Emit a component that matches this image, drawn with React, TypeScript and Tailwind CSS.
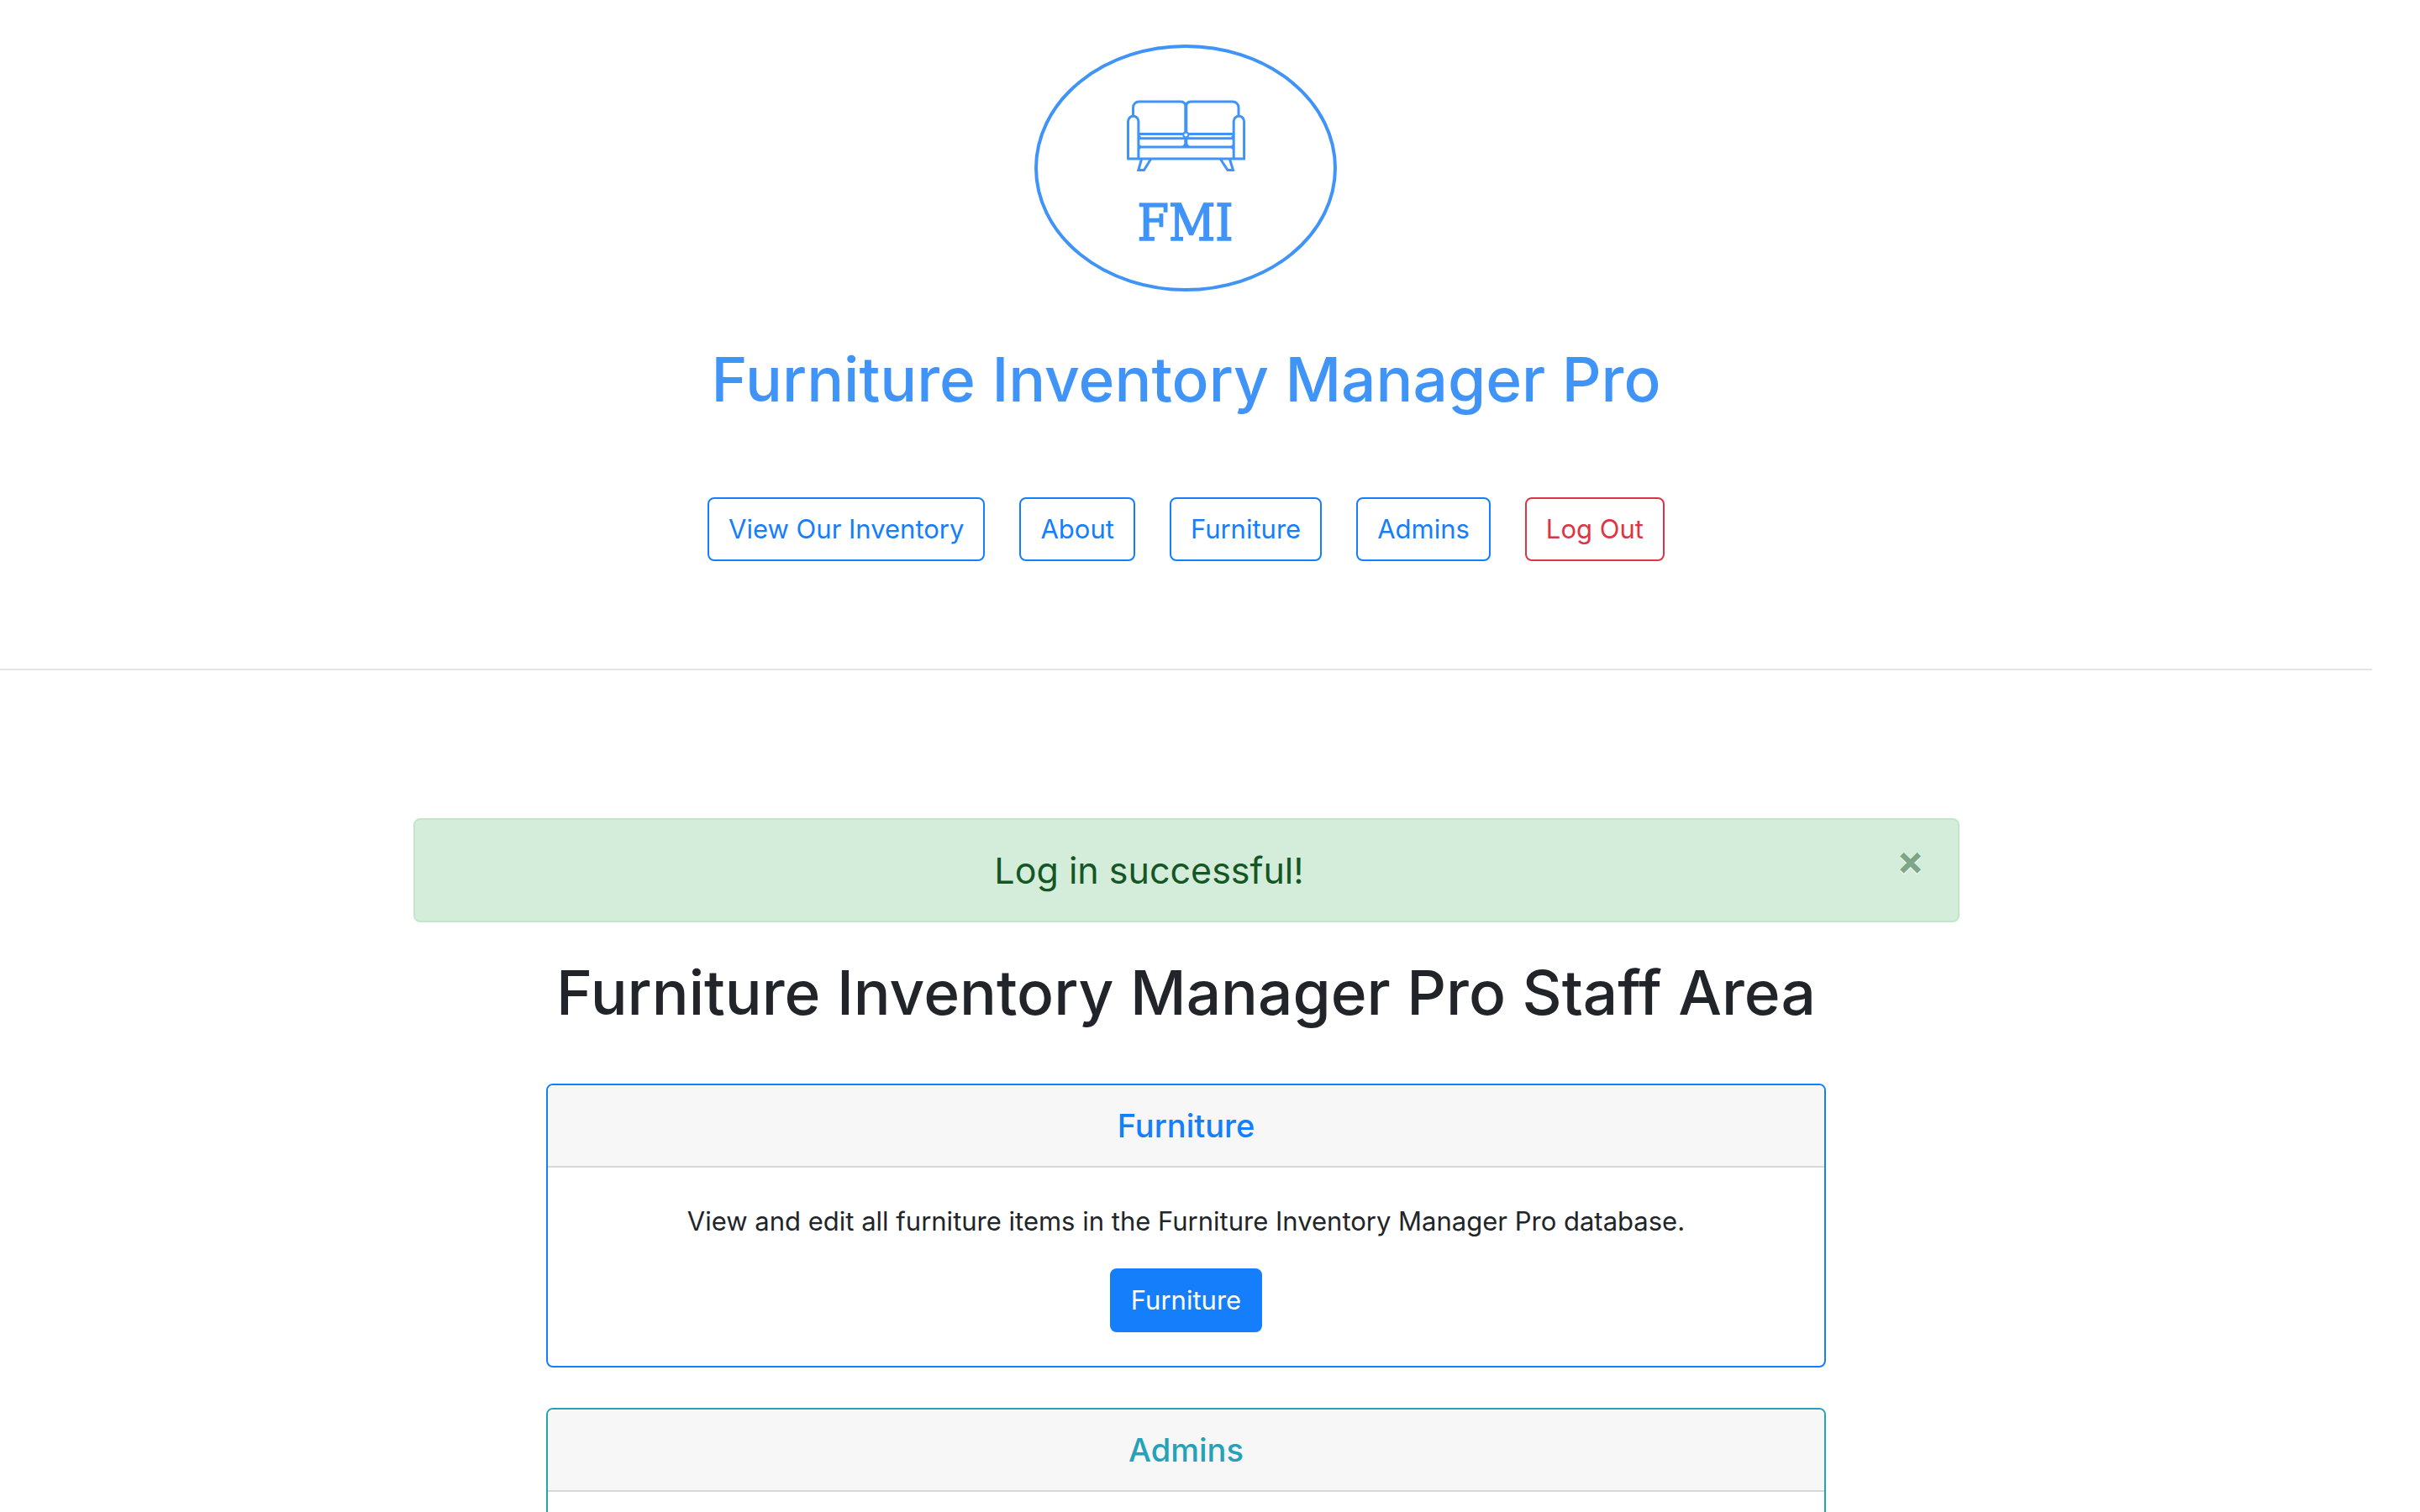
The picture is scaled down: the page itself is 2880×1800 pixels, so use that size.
import type { ReactNode } from "react";

function Logo() {
  return (
    <svg
      viewBox="2 0 400 340"
      className="h-[340px] w-[400px]"
      fill="none"
      stroke="#4094f7"
      role="img"
      aria-label="FMI"
    >
      <ellipse cx="201" cy="170" rx="178" ry="145" strokeWidth="4" />
      <g strokeWidth="3">
        <path d="M138.500 108V98a7 7 0 0 1 7-7H194a7 7 0 0 1 7.300 4.500A7 7 0 0 1 208 91h49a7 7 0 0 1 7 7v10" />
        <path d="M201.300 94V127" strokeWidth="4" />
        <path d="M132.500 159V114.500a6.200 6.200 0 0 1 12.400 0V159M258.200 159V114.500a6.200 6.200 0 0 1 12.400 0V159" />
        <path d="M131.200 159H272" />
        <path d="M145 129.500H198M204.500 129.500H258M145 134.800H258M145 145H258" />
        <circle cx="201.300" cy="130.500" r="3" strokeWidth="2" />
        <path d="M201.300 134.500V144" strokeWidth="4" />
        <path d="M198 145L201.300 141.500L204.600 145" />
        <path d="M145 131.500l2.500 1.500M258 131.500l-2.500 1.500M145 142l3 3l-3 3M258 142l-3 3l3 3" strokeWidth="1.600" />
        <path d="M148.500 159.500L144.800 172.500H151.500L159.500 159.500M253.500 159.500L257.500 172.500H251L242.500 159.500" />
      </g>
      <text
        x="200.500"
        y="256"
        textAnchor="middle"
        fill="#4094f7"
        strokeWidth="1.600"
        className="text-[60px] [font-family:'DejaVu_Serif_Condensed','DejaVu_Serif',serif]"
      >
        FMI
      </text>
    </svg>
  );
}

const navLinks = ["View Our Inventory", "About", "Furniture", "Admins"];

function NavLink({ children, danger }: { children: ReactNode; danger?: boolean }) {
  return (
    <a
      href="#"
      className={
        danger
          ? "rounded-lg border-2 border-[#dc3545] px-[23px] py-3 leading-[48px] text-[#dc3545]"
          : "rounded-lg border-2 border-[#147efb] px-[23px] py-3 leading-[48px] text-[#147efb]"
      }
    >
      {children}
    </a>
  );
}

export default function App() {
  return (
    <div className="h-screen overflow-hidden bg-white pr-[57px] text-center text-[31px] text-[#212529] [font-family:Inter,'Liberation_Sans',sans-serif]">
      <header className="flex flex-col items-center border-b-2 border-[#e5e5e5] pt-[30px] pb-32">
        <Logo />
        <h1 className="mt-[34px] text-[73px] leading-[96px] font-medium text-[#4094f7]">
          Furniture Inventory Manager Pro
        </h1>
        <nav className="mt-[92px] flex gap-[41px]">
          {navLinks.map((label) => (
            <NavLink key={label}>{label}</NavLink>
          ))}
          <NavLink danger>Log Out</NavLink>
        </nav>
      </header>

      <main className="mx-auto mt-44 max-w-[1840px]">
        <div
          role="alert"
          className="flex items-start rounded-lg border-2 border-[#c3e6cb] bg-[#d4edda] text-[#155724]"
        >
          <p className="flex-1 py-6 pl-6 text-[43px] leading-[72px]">Log in successful!</p>
          <button
            type="button"
            aria-label="Close"
            className="mt-[18px] w-28 text-[48px] leading-[60px] font-bold text-[#155724]/50 [text-shadow:0_2px_0_#ffffff80]"
          >
            ×
          </button>
        </div>

        <h2 className="mt-9 text-[73px] leading-[96px] font-medium">
          Furniture Inventory Manager Pro Staff Area
        </h2>

        <div className="mx-auto mt-15 flex max-w-[1523px] flex-col gap-12">
          <section className="rounded-lg border-2 border-[#147efb]">
            <h3 className="rounded-t-md border-b-2 border-[#d8d8d8] bg-[#f7f7f7] py-6 text-[38px] leading-[48px] font-medium text-[#147efb]">
              Furniture
            </h3>
            <div className="flex flex-col items-center gap-8 p-10">
              <p className="leading-[48px]">
                View and edit all furniture items in the Furniture Inventory Manager Pro database.
              </p>
              <a
                href="#"
                className="rounded-lg border-2 border-[#147efb] bg-[#147efb] px-[23px] py-3 leading-[48px] text-white"
              >
                Furniture
              </a>
            </div>
          </section>
          <section className="rounded-lg border-2 border-[#25a2b7]">
            <h3 className="rounded-t-md border-b-2 border-[#d8d8d8] bg-[#f7f7f7] py-6 text-[38px] leading-[48px] font-medium text-[#25a2b7]">
              Admins
            </h3>
            <div className="h-60" />
          </section>
        </div>
      </main>
    </div>
  );
}
